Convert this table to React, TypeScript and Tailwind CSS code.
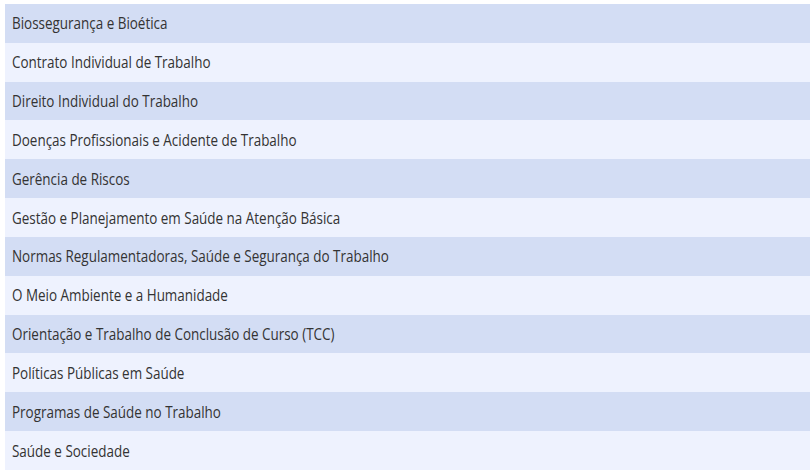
import React from 'react';

const disciplinas = [
  'Biossegurança e Bioética',
  'Contrato Individual de Trabalho',
  'Direito Individual do Trabalho',
  'Doenças Profissionais e Acidente de Trabalho',
  'Gerência de Riscos',
  'Gestão e Planejamento em Saúde na Atenção Básica',
  'Normas Regulamentadoras, Saúde e Segurança do Trabalho',
  'O Meio Ambiente e a Humanidade',
  'Orientação e Trabalho de Conclusão de Curso (TCC)',
  'Políticas Públicas em Saúde',
  'Programas de Saúde no Trabalho',
  'Saúde e Sociedade',
];

export default function App() {
  return (
    <div className="min-h-screen bg-white pt-[4px] pl-[5px] font-['Open_Sans',sans-serif]">
      <table className="w-full border-collapse">
        <tbody>
          {disciplinas.map((nome, i) => (
            <tr key={nome} className={i % 2 === 0 ? 'bg-[#d3ddf4]' : 'bg-[#eef2fe]'}>
              <td className="h-[38.84px] p-0 pl-[7px] text-[16px] text-[#333] whitespace-nowrap">
                <span className="inline-block origin-left scale-x-[0.84]">{nome}</span>
              </td>
            </tr>
          ))}
        </tbody>
      </table>
    </div>
  );
}
